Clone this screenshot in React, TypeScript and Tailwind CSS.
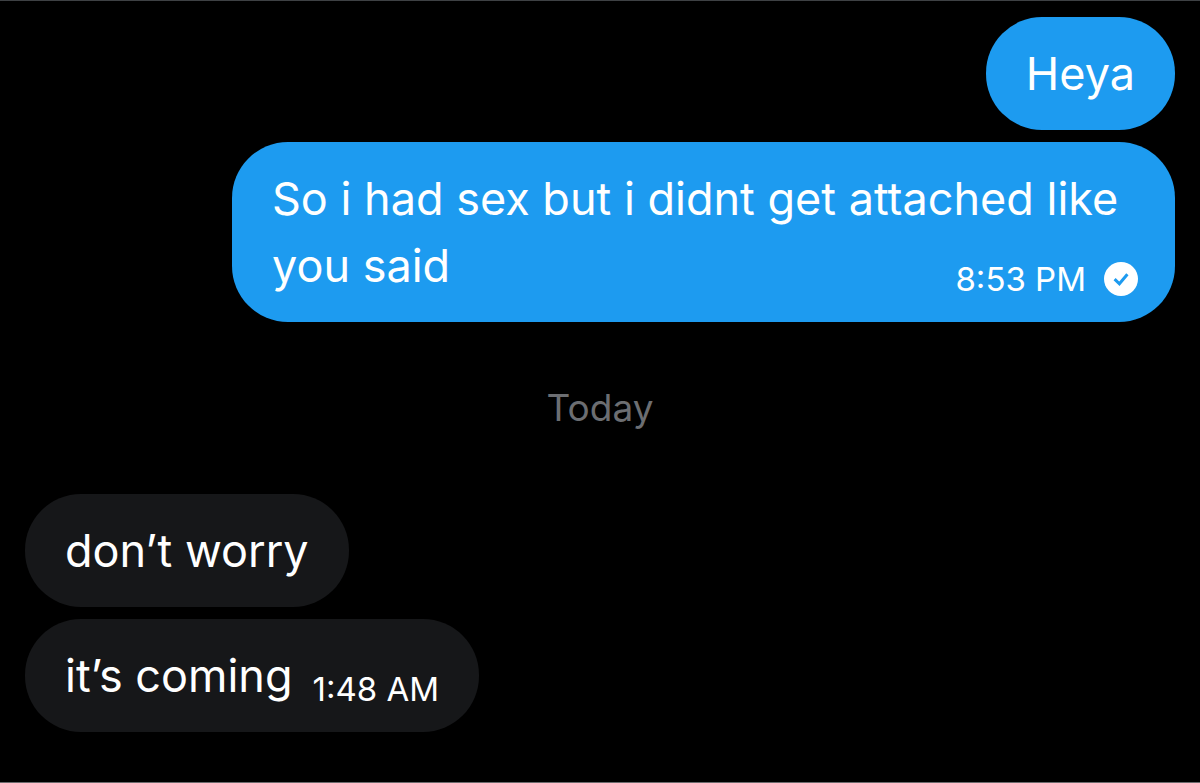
type Message = {
  text: string;
  time?: string;
  sent?: boolean;
  delivered?: boolean;
};

const yesterday: Message[] = [
  { text: "Heya", sent: true },
  {
    text: "So i had sex but i didnt get attached like you said",
    time: "8:53 PM",
    sent: true,
    delivered: true,
  },
];

const today: Message[] = [
  { text: "don’t worry" },
  { text: "it’s coming", time: "1:48 AM" },
];

function DeliveredIcon() {
  return (
    <svg viewBox="0 0 34 34" className="w-[34px] h-[34px]" role="img" aria-label="Delivered">
      <circle cx="17" cy="17" r="17" fill="#fff" />
      <path
        d="M10.6 17.2l4.8 4.6 8-9.6"
        fill="none"
        stroke="#1d9bf0"
        strokeWidth="3"
      />
    </svg>
  );
}

function Bubble({ message }: { message: Message }) {
  const { text, time, sent, delivered } = message;

  return (
    <li
      className={`max-w-[82%] rounded-[56px] px-10 py-[23px] text-[45px] leading-[67px] text-white ${
        sent ? "self-end bg-[#1d9bf0]" : "self-start bg-[#161719]"
      }`}
    >
      {text}
      {time && (
        <span
          className={`float-right mt-[27px] ml-5 flex items-center gap-[18px] text-[33px] leading-10 whitespace-nowrap ${
            delivered ? "-mr-[3px]" : ""
          }`}
        >
          <time>{time}</time>
          {delivered && <DeliveredIcon />}
        </span>
      )}
    </li>
  );
}

export default function App() {
  return (
    <main className="min-h-screen bg-black border-t border-b border-t-[#3e4144] border-b-[#6b6b6d] px-[25px] pt-4 pb-12 font-['Inter',sans-serif]">
      <ul className="flex flex-col gap-3">
        {yesterday.map((message) => (
          <Bubble key={message.text} message={message} />
        ))}
      </ul>
      <h2 className="my-[60px] text-center text-[37px] leading-[52px] text-[#6c6e72]">
        Today
      </h2>
      <ul className="flex flex-col gap-3">
        {today.map((message) => (
          <Bubble key={message.text} message={message} />
        ))}
      </ul>
    </main>
  );
}
